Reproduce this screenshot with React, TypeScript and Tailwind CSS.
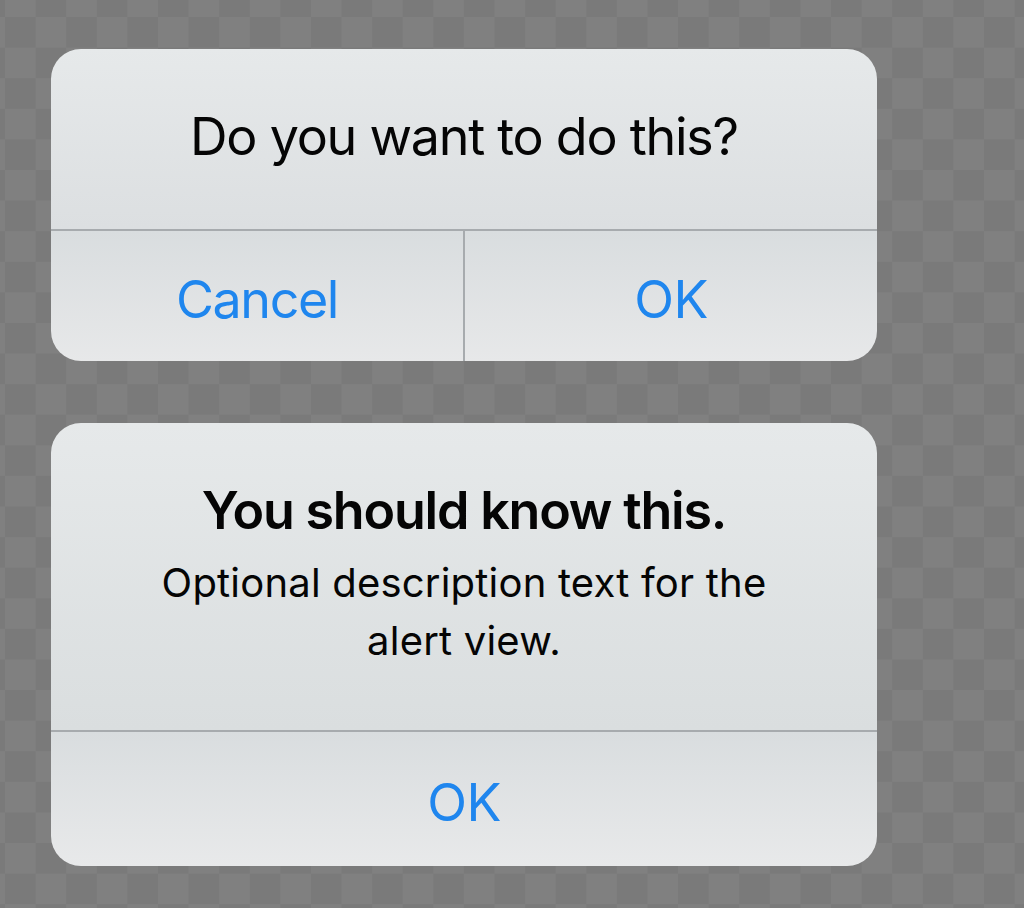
import React from "react";

const font = { fontFamily: "Inter, 'Noto Sans', 'Liberation Sans', sans-serif" };

export default function App() {
  return (
    <div
      className="w-full h-[908px] overflow-hidden bg-[conic-gradient(#808080_25%,#7a7a7a_0_50%,#808080_0_75%,#7a7a7a_0)] bg-[length:61.2px_61.2px] bg-[position:5px_17px] flex flex-col pt-[49px] pl-[51px] gap-[62px]"
      style={font}
    >
      {/* Alert 1 */}
      <div className="w-[826px] rounded-[30px] overflow-hidden flex flex-col">
        <div className="h-[180px] flex items-center justify-center bg-gradient-to-b from-[#e6e9ea] to-[#dcdfe1] pb-[4px]">
          <span className="text-[52px] leading-[60px] text-[#050505] tracking-[-1.25px]">Do you want to do this?</span>
        </div>
        <div className="h-[2px] bg-[#a7abae]" />
        <div className="h-[130px] flex bg-gradient-to-b from-[#d9dddf] to-[#e7e8e9]">
          <div className="flex-1 flex items-center justify-center pt-[8px]">
            <span className="text-[52px] leading-[60px] text-[#1f86ee] tracking-[-1.4px]">Cancel</span>
          </div>
          <div className="w-[2px] bg-[#a7abae]" />
          <div className="flex-1 flex items-center justify-center pt-[8px]">
            <span className="text-[52px] leading-[60px] text-[#1f86ee] tracking-[-0.5px]">OK</span>
          </div>
        </div>
      </div>

      {/* Alert 2 */}
      <div className="w-[826px] rounded-[30px] overflow-hidden flex flex-col">
        <div className="h-[307px] flex flex-col items-center pt-[58px] px-[90px] bg-gradient-to-b from-[#e6e9ea] to-[#dadedf] text-center">
          <span className="text-[52px] leading-[60px] font-semibold text-[#050505] tracking-[-1.2px]">You should know this.</span>
          <p className="mt-[13px] text-[40px] leading-[58px] text-[#050505] tracking-[0.2px]">
            Optional description text for the alert view.
          </p>
        </div>
        <div className="h-[2px] bg-[#a7abae]" />
        <div className="h-[134px] flex items-center justify-center pt-[8px] bg-gradient-to-b from-[#d9dddf] to-[#e8e9ea]">
          <span className="text-[52px] leading-[60px] text-[#1f86ee] tracking-[-0.5px]">OK</span>
        </div>
      </div>
    </div>
  );
}
